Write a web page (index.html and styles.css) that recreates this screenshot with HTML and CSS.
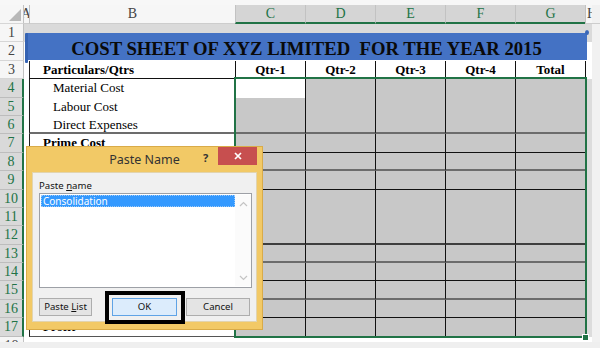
FILE: index.html
```html
<!DOCTYPE html>
<html>
<head>
<meta charset="utf-8">
<link rel="stylesheet" href="styles.css">
</head>
<body>
<div class="app">
  <div class="topstrip"></div>

  <div class="row hdr">
    <div class="rh corner"><svg width="24" height="18" viewBox="0 0 24 18"><polygon points="21,4 21,16 9,16" fill="#b8b8b8"/></svg></div>
    <div class="a">A</div>
    <div class="b">B</div>
    <div class="c sel">C</div>
    <div class="d sel">D</div>
    <div class="e sel">E</div>
    <div class="f sel">F</div>
    <div class="g sel">G</div>
    <div class="h">H</div>
    <div class="x"></div>
  </div>

  <div class="row r1"><div class="rh">1</div><div class="a"></div><div class="b"></div><div class="c"></div><div class="d"></div><div class="e"></div><div class="f"></div><div class="g"></div><div class="h"></div><div class="x"></div></div>
  <div class="row r2"><div class="rh">2</div><div class="a"></div><div class="b"></div><div class="c"></div><div class="d"></div><div class="e"></div><div class="f"></div><div class="g"></div><div class="h"></div><div class="x"></div></div>
  <div class="row r3 bk"><div class="rh">3</div><div class="a"></div><div class="b bold ind1">Particulars/Qtrs</div><div class="c bold ctr">Qtr-1</div><div class="d bold ctr">Qtr-2</div><div class="e bold ctr">Qtr-3</div><div class="f bold ctr">Qtr-4</div><div class="g bold ctr">Total</div><div class="h"></div><div class="x"></div></div>
  <div class="row s r4"><div class="rh">4</div><div class="a"></div><div class="b ind2">Material Cost</div><div class="c"></div><div class="d"></div><div class="e"></div><div class="f"></div><div class="g"></div><div class="h"></div><div class="x"></div></div>
  <div class="row s"><div class="rh">5</div><div class="a"></div><div class="b ind2">Labour Cost</div><div class="c"></div><div class="d"></div><div class="e"></div><div class="f"></div><div class="g"></div><div class="h"></div><div class="x"></div></div>
  <div class="row s gr"><div class="rh">6</div><div class="a"></div><div class="b ind2">Direct Expenses</div><div class="c"></div><div class="d"></div><div class="e"></div><div class="f"></div><div class="g"></div><div class="h"></div><div class="x"></div></div>
  <div class="row s bk"><div class="rh">7</div><div class="a"></div><div class="b bold ind1">Prime Cost</div><div class="c"></div><div class="d"></div><div class="e"></div><div class="f"></div><div class="g"></div><div class="h"></div><div class="x"></div></div>
  <div class="row s gr"><div class="rh">8</div><div class="a"></div><div class="b"></div><div class="c"></div><div class="d"></div><div class="e"></div><div class="f"></div><div class="g"></div><div class="h"></div><div class="x"></div></div>
  <div class="row s bk"><div class="rh">9</div><div class="a"></div><div class="b"></div><div class="c"></div><div class="d"></div><div class="e"></div><div class="f"></div><div class="g"></div><div class="h"></div><div class="x"></div></div>
  <div class="row s"><div class="rh">10</div><div class="a"></div><div class="b"></div><div class="c"></div><div class="d"></div><div class="e"></div><div class="f"></div><div class="g"></div><div class="h"></div><div class="x"></div></div>
  <div class="row s"><div class="rh">11</div><div class="a"></div><div class="b"></div><div class="c"></div><div class="d"></div><div class="e"></div><div class="f"></div><div class="g"></div><div class="h"></div><div class="x"></div></div>
  <div class="row s dk"><div class="rh">12</div><div class="a"></div><div class="b"></div><div class="c"></div><div class="d"></div><div class="e"></div><div class="f"></div><div class="g"></div><div class="h"></div><div class="x"></div></div>
  <div class="row s gr"><div class="rh">13</div><div class="a"></div><div class="b"></div><div class="c"></div><div class="d"></div><div class="e"></div><div class="f"></div><div class="g"></div><div class="h"></div><div class="x"></div></div>
  <div class="row s bk"><div class="rh">14</div><div class="a"></div><div class="b"></div><div class="c"></div><div class="d"></div><div class="e"></div><div class="f"></div><div class="g"></div><div class="h"></div><div class="x"></div></div>
  <div class="row s gr"><div class="rh">15</div><div class="a"></div><div class="b"></div><div class="c"></div><div class="d"></div><div class="e"></div><div class="f"></div><div class="g"></div><div class="h"></div><div class="x"></div></div>
  <div class="row s bk"><div class="rh">16</div><div class="a"></div><div class="b"></div><div class="c"></div><div class="d"></div><div class="e"></div><div class="f"></div><div class="g"></div><div class="h"></div><div class="x"></div></div>
  <div class="row s bk r17"><div class="rh">17</div><div class="a"></div><div class="b bold ind1">Profit</div><div class="c"></div><div class="d"></div><div class="e"></div><div class="f"></div><div class="g"></div><div class="h"></div><div class="x"></div></div>
  <div class="row r18"><div class="rh">18</div><div class="a"></div><div class="b"></div><div class="c"></div><div class="d"></div><div class="e"></div><div class="f"></div><div class="g"></div><div class="h"></div><div class="x"></div></div>
  <div class="bottomstrip"></div>

  <div class="shape">COST SHEET OF XYZ LIMITED&nbsp; FOR THE YEAR 2015</div>
  <div class="selection"></div>
  <div class="handle"></div>

  <div class="dialog">
    <div class="titlebar">
      <span class="title">Paste Name</span>
      <span class="help">?</span>
      <span class="close"><svg width="8" height="8" viewBox="0 0 8 8"><path d="M1 1 L7 7 M7 1 L1 7" stroke="#fff" stroke-width="1.7"/></svg></span>
    </div>
    <div class="client">
      <div class="label">Paste <u>n</u>ame</div>
      <div class="listbox">
        <div class="items"><div class="item selitem">Consolidation</div></div>
        <div class="scroll">
          <svg width="9" height="6" viewBox="0 0 9 6"><path d="M1 5 L4.5 1.5 L8 5" fill="none" stroke="#c4c4c4" stroke-width="1.2"/></svg>
          <svg width="9" height="6" viewBox="0 0 9 6"><path d="M1 1 L4.5 4.5 L8 1" fill="none" stroke="#c4c4c4" stroke-width="1.2"/></svg>
        </div>
      </div>
      <div class="buttons">
        <div class="btn pl">Paste <u>L</u>ist</div>
        <div class="mark"><div class="btn ok">OK</div></div>
        <div class="btn cancel">Cancel</div>
      </div>
    </div>
  </div>
</div>
</body>
</html>
```

FILE: styles.css
```css
* { box-sizing: border-box; margin: 0; padding: 0; }
html, body { width: 600px; height: 348px; overflow: hidden; }
body { background: #fff; font-family: "Liberation Serif", "Times New Roman", serif; }
.app { position: relative; width: 600px; height: 348px; display: flex; flex-direction: column; overflow: hidden; }

.topstrip { height: 5px; flex: none; background: #f7f7f7; }
.bottomstrip { flex: 1; background: #efefef; }

.row { display: flex; flex: none; height: 18.4px; font-size: 13px; line-height: 18.4px; color: #000; }
.row > div { flex: none; overflow: hidden; white-space: nowrap; }
.rh { width: 24px; }
.a { width: 5px; }
.b { width: 206px; }
.c, .d, .e, .f, .g { width: 70px; }
.h { width: 7px; }
.row > .x { flex: 1; background: #f1f1f1; }

/* column header row */
.row.hdr { height: 19px; line-height: 18px; font-size: 14px; }
.hdr > div { background: #f6f6f6; color: #444; text-align: center; border-bottom: 1px solid #cdcdcd; }
.hdr > .c, .hdr > .d, .hdr > .e, .hdr > .f, .hdr > .g, .hdr > .h { border-left: 1px solid #c2c2c2; }
.hdr > .b { border-left: 1px solid #c2c2c2; }
.hdr > .a { text-indent: -3px; }
.hdr > .h { text-align: left; text-indent: 1px; }
.hdr > .sel { background: #d5d5d5; color: #217346; border-bottom: 2px solid #217346; }
.hdr > .corner { border-right: 1px solid #c2c2c2; }
.corner svg { display: block; }
.hdr > .x { background: #f1f1f1; }

/* row headers */
.row > .rh { background: #f6f6f6; color: #444; text-align: center; font-size: 14px; border-right: 1px solid #c2c2c2; border-bottom: 1px solid #d6d6d6; }
.row.s > .rh { background: #d9d9d9; color: #217346; border-right: 2px solid #217346; border-bottom-color: #bdbdbd; }

/* cell content */
.bold { font-weight: bold; }
.ctr { text-align: center; }
.ind1 { padding-left: 13px; }
.ind2 { padding-left: 23px; }

/* row 1 band */
.r1 > .a, .r1 > .b, .r1 > .c, .r1 > .d, .r1 > .e, .r1 > .f, .r1 > .g, .r1 > .h { background: #dadada; }

/* table borders */
.r3 > .b, .s > .b { border-left: 1px solid #222; }
.r3 > .c, .r3 > .d, .r3 > .e, .r3 > .f, .r3 > .g, .r3 > .h { border-left: 1px solid #111; }
.s > .c, .s > .d, .s > .e, .s > .f, .s > .g, .s > .h { border-left: 1px solid #111; }
.s > .c, .s > .d, .s > .e, .s > .f, .s > .g { background: #c8c8c8; }
.r4 > .c { background: #fff; }
.s > .h { background: #dcdcdc; }

.bk > .b, .bk > .c, .bk > .d, .bk > .e, .bk > .f, .bk > .g { border-bottom: 1px solid #111; }
.gr > .b, .gr > .c, .gr > .d, .gr > .e, .gr > .f, .gr > .g { border-bottom: 2px solid #6c6c6c; }
.dk > .b, .dk > .c, .dk > .d, .dk > .e, .dk > .f, .dk > .g { border-bottom: 2px solid #3e3e3e; }
.r17 > .b { border-bottom-color: #555; }

.row.r18 { height: 5px; }
.r18 > .rh { border-bottom: none; line-height: 17px; }

/* title shape */
.shape {
  position: absolute; left: 26px; top: 33px; width: 561px; height: 27px;
  background: #4472c4; color: #0a0a0a;
  font-weight: bold; font-size: 18.7px; line-height: 22px; padding-top: 5px;
  text-align: center; white-space: nowrap;
}
.shape::before { content: ""; position: absolute; left: -1px; top: 0; width: 3px; height: 30px; background: #3563b3; border-radius: 1px; }
.shape::after { content: ""; position: absolute; right: -2px; top: -3px; width: 4px; height: 5px; background: #3a67b8; border-radius: 50%; }

/* selection */
.selection { position: absolute; left: 234px; top: 77px; width: 353px; height: 261px; border: 2px solid #217346; }
.handle { position: absolute; left: 582px; top: 334px; width: 7px; height: 7px; background: #217346; border: 1px solid #fff; }

/* dialog */
.dialog {
  position: absolute; left: 26px; top: 146px; width: 237px; height: 184px;
  background: #f2c966; border: 1px solid #d9ab48;
  display: flex; flex-direction: column;
  font-family: "Noto Sans", "Open Sans", sans-serif; color: #000;
}
.titlebar { height: 25px; flex: none; display: flex; align-items: flex-start; padding-left: 65px; }
.title { flex: 1; text-align: center; font-size: 12.5px; line-height: 25px; color: #333; }
.help { width: 17px; margin-right: 4px; text-align: center; font-weight: bold; font-size: 11px; line-height: 22px; color: #333; }
.close { width: 39px; height: 18px; margin-right: 5px; background: #c74f4f; display: flex; align-items: center; justify-content: center; }
.close svg { display: block; }

.client {
  flex: 1; margin: 0 5px 7px 5px;
  background: #f0f0f0; border: 1px solid #e2d4ae;
  padding: 7px 0 0 6px;
  display: flex; flex-direction: column;
}
.label { font-size: 9.6px; line-height: 12px; height: 12px; color: #111; }
.listbox { margin-top: 1px; width: 213px; height: 95px; border: 1px solid #9da0a6; background: #fff; display: flex; padding: 1px 0 1px 1px; }
.items { flex: 1; }
.item { height: 12px; font-size: 10px; line-height: 12px; padding-left: 2px; }
.selitem { background: #3399ff; color: #fff; outline: 1px dotted #9cc9f7; outline-offset: -1px; }
.scroll { width: 16px; display: flex; flex-direction: column; justify-content: space-between; align-items: center; padding: 6px 0 5px; background: #fbfbfb; }
.scroll svg { display: block; }

.buttons { margin-top: 10px; display: flex; align-items: center; height: 18px; }
.btn { height: 18px; border: 1px solid #adadad; background: #e4e4e4; font-size: 9.6px; line-height: 16px; text-align: center; color: #111; }
.pl { width: 53px; }
.cancel { width: 64px; margin-left: 1px; }
.mark { margin-left: 13px; width: 80px; height: 33px; border: 4px solid #000; padding: 3px 0 0 3px; background: #f0f0f0; flex: none; }
.ok { width: 65px; background: #dcecfc; border-color: #5fa3e6; }
```
